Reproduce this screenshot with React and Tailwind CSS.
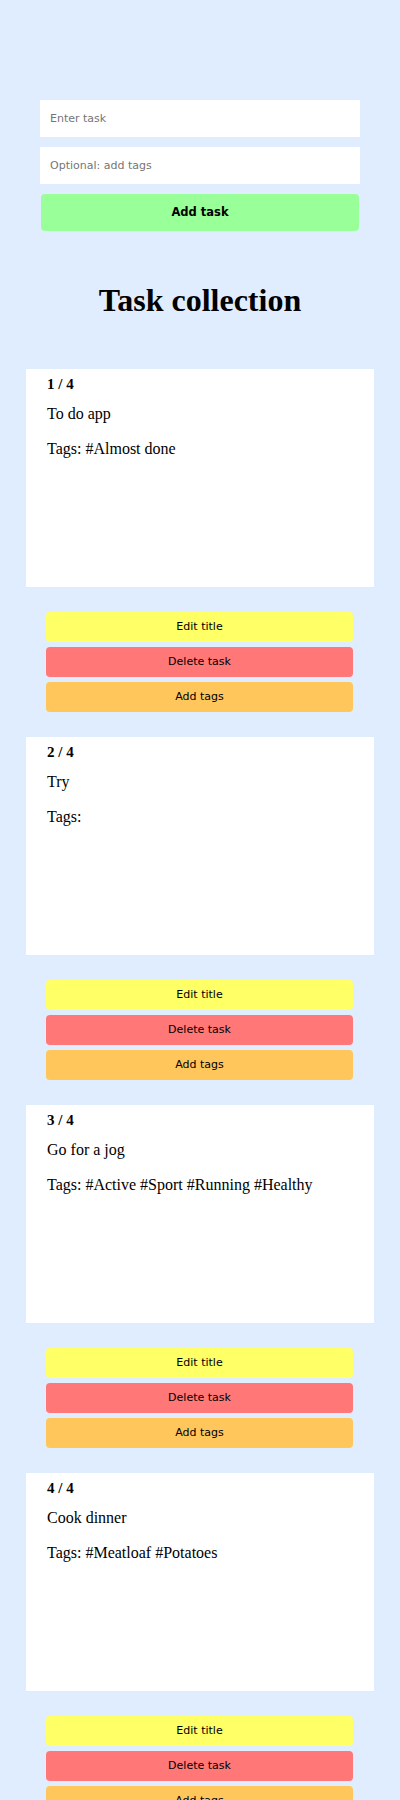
import React from "react";

const tasks = [
  { title: "To do app", tags: "#Almost done" },
  { title: "Try", tags: "" },
  { title: "Go for a jog", tags: "#Active #Sport #Running #Healthy" },
  { title: "Cook dinner", tags: "#Meatloaf #Potatoes" },
];

export default function App() {
  return (
    <div className="min-h-screen bg-[#e0edfe] pt-[100px] text-black">
      <div className="mx-[40px] flex w-[320px] flex-col gap-[10px] font-['DejaVu_Sans',Verdana,sans-serif]">
        <input
          className="h-[37px] w-full bg-white px-[10px] font-['DejaVu_Sans',Verdana,sans-serif] text-[11px] outline-none placeholder:text-[#757575]"
          placeholder="Enter task"
        />
        <input
          className="h-[37px] w-full bg-white px-[10px] font-['DejaVu_Sans',Verdana,sans-serif] text-[11px] outline-none placeholder:text-[#757575]"
          placeholder="Optional: add tags"
        />
        <button className="mx-px h-[37px] rounded-[4px] bg-[#99ff99] font-['DejaVu_Sans',Verdana,sans-serif] text-[11.5px] font-bold">
          Add task
        </button>
      </div>

      <h1 className="mt-[51px] text-center font-['Liberation_Serif','Times_New_Roman',serif] text-[32px] font-bold leading-[37px]">
        Task collection
      </h1>

      <div className="mt-[50px] flex flex-col gap-[25px] pb-[25px]">
        {tasks.map((t, i) => (
          <div key={i} className="flex flex-col gap-[25px]">
            <div className="mx-[26px] h-[218px] w-[348px] bg-white pl-[21px] pt-[6px] font-['Liberation_Serif','Times_New_Roman',serif]">
              <div className="text-[15px] font-bold leading-[18px]">
                {i + 1} / {tasks.length}
              </div>
              <p className="mt-[12px] text-[16px] leading-[18px]">{t.title}</p>
              <p className="mt-[17px] text-[16px] leading-[18px]">
                Tags: {t.tags}
              </p>
            </div>
            <div className="ml-[46px] flex w-[307px] flex-col gap-[5px]">
              <button className="h-[30px] rounded-[4px] bg-[#ffff66] font-['DejaVu_Sans',Verdana,sans-serif] text-[11px]">
                Edit title
              </button>
              <button className="h-[30px] rounded-[4px] bg-[#ff7777] font-['DejaVu_Sans',Verdana,sans-serif] text-[11px]">
                Delete task
              </button>
              <button className="h-[30px] rounded-[4px] bg-[#ffc65c] font-['DejaVu_Sans',Verdana,sans-serif] text-[11px]">
                Add tags
              </button>
            </div>
          </div>
        ))}
      </div>
    </div>
  );
}
